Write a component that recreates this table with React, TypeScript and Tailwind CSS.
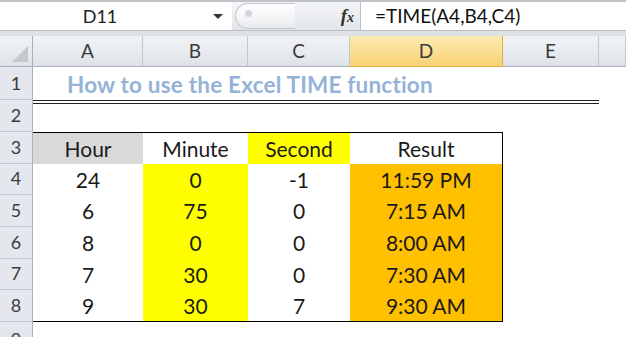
import React from 'react';

const cols = ['A', 'B', 'C', 'D', 'E', ''];

const rows = [
  { h: 24, m: 0, s: -1, r: '11:59 PM' },
  { h: 6, m: 75, s: 0, r: '7:15 AM' },
  { h: 8, m: 0, s: 0, r: '8:00 AM' },
  { h: 7, m: 30, s: 0, r: '7:30 AM' },
  { h: 9, m: 30, s: 7, r: '9:30 AM' },
];

const RowHead = ({ n, className = '' }: { n: number; className?: string }) => (
  <div
    className={`flex items-center justify-center bg-[#e4e8ee] border-r border-b border-r-[#a9b1bb] border-b-[#c3c9d1] text-[18px] text-[#3c3c3c] ${className}`}
  >
    {n}
  </div>
);

const FormulaBar = () => (
  <div className="flex h-[31px] border-t-2 border-b border-t-[#bfc3c8] border-b-[#b9bec4] bg-white">
    <div className="relative flex w-[232px] items-center justify-center bg-white text-[18px] text-[#222]">
      <span className="-ml-[32px]">D11</span>
      <span className="absolute right-[9px] top-[12px] h-0 w-0 border-x-[5px] border-t-[5px] border-x-transparent border-t-[#333]" />
    </div>
    <div className="flex w-[128px] items-center bg-gradient-to-b from-[#f4f5f7] to-[#e3e6ea] pr-[6px]">
      <div className="relative ml-[3px] h-[26px] w-[60px] rounded-l-full border border-r-0 border-[#c3c7cc] bg-gradient-to-b from-white to-[#e9ecef]">
        <span className="absolute left-[9px] top-[6px] h-[7px] w-[7px] rounded-full bg-[#d3d6da]" />
      </div>
      <span className="ml-auto font-['Liberation_Serif'] text-[19px] font-bold italic text-[#333]">
        f<span className="text-[14px]">x</span>
      </span>
    </div>
    <div className="flex flex-1 items-center border-l border-[#b9bec4] pl-[14px] text-[19px] text-[#111]">
      =TIME(A4,B4,C4)
    </div>
  </div>
);

export default function App() {
  return (
    <div className="h-[337px] w-[626px] overflow-hidden bg-[#dee2e7] font-['Lato',sans-serif]">
      <FormulaBar />
      <div className="mt-[5px] grid grid-cols-[33px_110px_105px_102px_153px_96px_1fr] grid-rows-[31px_33px_32px_repeat(6,31.67px)_1fr] bg-white">
        {/* column headers */}
        <div className="relative border-r border-b border-r-[#a9b1bb] border-b-[#a9b1bb] bg-gradient-to-b from-[#f1f3f6] to-[#dfe3e8]">
          <svg className="absolute bottom-[4px] right-[4px]" width="16" height="16" viewBox="0 0 16 16">
            <polygon points="16,0 16,16 0,16" fill="#c4c9cf" />
          </svg>
        </div>
        {cols.map((c) =>
          c === 'D' ? (
            <div
              key={c}
              className="flex items-center justify-center border-r border-b border-[#e0ad3e] bg-gradient-to-b from-[#fcebb0] to-[#f8d274] text-[19px] text-[#3a3a3a]"
            >
              {c}
            </div>
          ) : (
            <div
              key={c || 'F'}
              className="flex items-center justify-center border-r border-b border-r-[#c2c7ce] border-b-[#a9b1bb] bg-gradient-to-b from-[#f1f3f6] to-[#dfe3e8] text-[19px] text-[#3a3a3a]"
            >
              {c}
            </div>
          )
        )}

        {/* row 1: title */}
        <RowHead n={1} />
        <div className="col-span-6 flex items-center pl-[34px] pt-[2px] text-[22.5px] font-bold tracking-[0.2px] text-[#95b3d7]">
          How to use the Excel TIME function
        </div>

        {/* row 2: double rule under the title */}
        <RowHead n={2} />
        <div className="col-span-5 border-t-[4px] border-double border-[#222]" />
        <div />

        {/* row 3: table header */}
        <RowHead n={3} />
        <div className="flex items-center justify-center border-t border-black bg-[#d9d9d9] text-[21px] text-[#1a1a1a]">Hour</div>
        <div className="flex items-center justify-center border-t border-black bg-white text-[21px] text-[#1a1a1a]">Minute</div>
        <div className="flex items-center justify-center border-t border-black bg-[#ffff00] text-[21px] text-[#1a1a1a]">Second</div>
        <div className="flex items-center justify-center border-t border-r border-black bg-white text-[21px] text-[#1a1a1a]">Result</div>
        <div className="col-span-2" />

        {rows.map((r, i) => {
          const last = i === rows.length - 1;
          const bottom = last ? 'border-b border-black' : '';
          return (
            <React.Fragment key={i}>
              <RowHead n={i + 4} />
              <div className={`flex items-center justify-center text-[21px] text-[#1a1a1a] ${bottom}`}>{r.h}</div>
              <div className={`flex items-center justify-center bg-[#ffff00] text-[21px] text-[#1a1a1a] ${bottom}`}>{r.m}</div>
              <div className={`flex items-center justify-center text-[21px] text-[#1a1a1a] ${bottom}`}>{r.s}</div>
              <div className={`flex items-center justify-center border-r border-black bg-[#ffc000] text-[21px] text-[#1a1a1a] ${bottom}`}>{r.r}</div>
              <div className="col-span-2" />
            </React.Fragment>
          );
        })}

        <RowHead n={9} className="items-start pt-[4px]" />
        <div className="col-span-6" />
      </div>
    </div>
  );
}
